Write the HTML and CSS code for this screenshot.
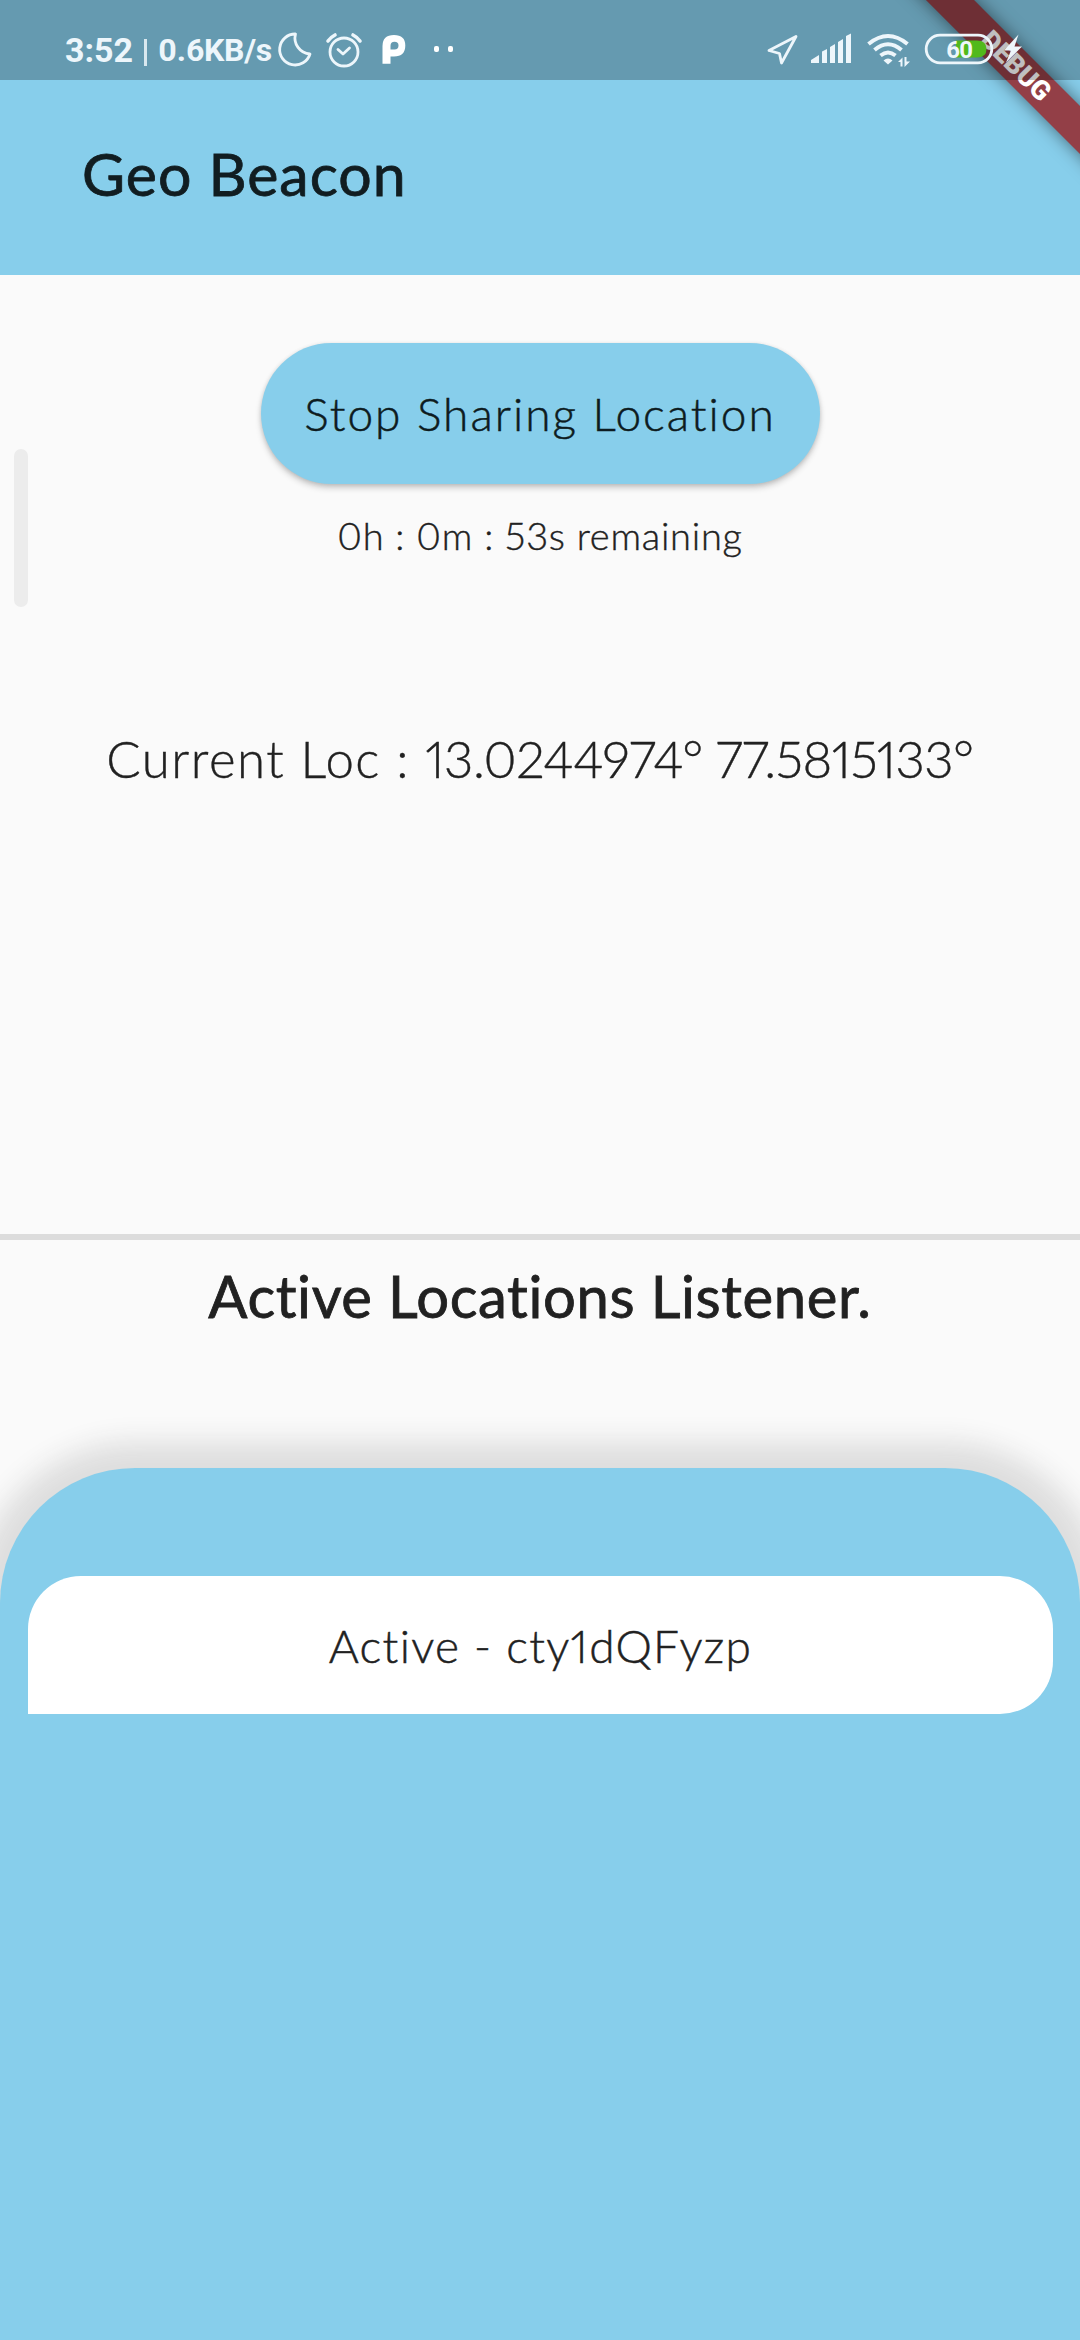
FILE: index.html
```html
<!DOCTYPE html>
<html lang="en">
<head>
<meta charset="utf-8">
<title>Geo Beacon</title>
<link rel="stylesheet" href="styles.css">
</head>
<body>
<div class="app">
  <header class="app-bar">
    <h1 class="title">Geo Beacon</h1>
    <div class="debug-banner">DEBUG</div>
    <div class="status-bar">
      <span class="clock">3:52</span><span class="separator"></span><span class="speed">0.6KB/s</span>
      <svg class="moon" width="38" height="80" viewBox="276 0 38 80"><path d="M295.500 34 A15.500 15.500 0 1 0 310 54 A16 16 0 0 1 295.500 34 Z"/></svg>
      <svg class="alarm" width="40" height="80" viewBox="324 0 40 80"><circle cx="344" cy="52" r="14"/><path d="M338 49.500 L343 54 L349.500 48"/><path class="bells" d="M328 41 Q331 37 335 35 M353 35 Q357 37 360 41"/></svg>
      <svg class="parking" width="26" height="80" viewBox="381 0 26 80"><path fill-rule="evenodd" d="M382.500 63.800 V46 Q382.500 35 394 35 Q405.300 35 405.300 45.500 Q405.300 56.500 394 56.500 H390.500 V63.800 Z M390.500 49.500 H394.500 Q398.500 49.500 398.500 45.500 Q398.500 41.800 394.500 41.800 Q390.500 41.800 390.500 46 Z"/></svg>
      <svg class="dots" width="24" height="80" viewBox="432 0 24 80"><rect x="434" y="46" width="5" height="6" rx="2"/><rect x="448" y="46" width="5" height="6" rx="2"/></svg>
      <svg class="compass" width="36" height="80" viewBox="764 0 36 80"><path d="M796 36.500 L769 50.500 L779.500 53.500 L781.500 63 Z"/></svg>
      <svg class="signal" width="42" height="80" viewBox="810 0 42 80"><path d="M811 63 V60 L819 55 V63 Z M822 63 V51.500 L827 49 V63 Z M830 63 V47 L835 44 V63 Z M838 63 V42 L843 39 V63 Z M846 63 V36 L851 33.500 V63 Z"/></svg>
      <svg class="wifi" width="46" height="80" viewBox="865 0 46 80"><g><path d="M868.500 44 Q888 28 907.500 44"/><path d="M874.500 50 Q888 38.500 901.500 50"/><path d="M880.500 55.500 Q888 49.500 895.500 55.500"/></g><path d="M883.500 60.500 Q888 56.500 892.500 60.500 L888 64.500 Z M898 62 L902.500 57.500 V66.500 H900.500 V62 Z M904.500 57 H906.500 V61.500 H910 L904.500 67 Z"/></svg>
      <svg class="battery" width="70" height="80" viewBox="924 0 70 80"><path class="charge" d="M956 40.500 H977 Q986.500 40.500 986.500 49 Q986.500 57.500 977 57.500 H956 Z"/><rect class="case" x="926.200" y="35.200" width="65.600" height="27.600" rx="13.800"/><text x="946" y="57.700">60</text></svg>
      <svg class="bolt" width="22" height="80" viewBox="1001 0 22 80"><path d="M1018.500 34.500 L1004 50.500 H1011 L1006 62.500 L1022 46.500 H1014.500 Z"/></svg>
    </div>
  </header>
  <main class="sharing">
    <button class="stop-button">Stop Sharing Location</button>
    <p class="remaining">0h : 0m : 53s remaining</p>
    <p class="location">Current Loc : <span class="coordinates">13.0244974° 77.5815133°</span></p>
    <div class="edge-handle"></div>
  </main>
  <section class="listener">
    <h2 class="listener-title">Active Locations Listener.</h2>
    <div class="sheet">
      <div class="card">Active - cty1dQFyzp</div>
    </div>
  </section>
</div>
</body>
</html>
```
FILE: styles.css
```css
* { box-sizing: border-box; }
body { margin: 0; background: #fafafa; overflow: hidden; }
.app {
  display: flex; flex-direction: column;
  width: 1080px; height: 2340px; overflow: hidden;
  color: #212121; font-family: Lato, "Noto Sans", sans-serif; font-weight: 300;
  font-variant-ligatures: none; font-variant-numeric: proportional-nums;
}
h1, h2 { margin: 0; font-weight: 400; }
p { margin: 0; }
.app-bar { position: relative; height: 275px; padding: 80px 0 0 82px; background: #87ceeb; overflow: hidden; }
.title { font-size: 59px; line-height: 188px; letter-spacing: 1px; color: #111d21; -webkit-text-stroke: .8px #111d21; }
.debug-banner {
  position: absolute; left: 866px; top: 49px; width: 300px; height: 34px;
  transform: rotate(45deg); background: #933f47; box-shadow: 0 0 17px rgba(0, 0, 0, .5);
  color: #fff; font: 900 27px/34px Roboto, sans-serif; text-align: center;
}
.status-bar {
  position: absolute; inset: 0 0 auto 0; height: 80px; padding-left: 65px;
  display: flex; background: rgba(0, 0, 0, .25);
  color: #edf6fb; font-family: Roboto, sans-serif; font-weight: 700;
}
.status-bar svg { flex: none; fill: #edf6fb; }
.clock { width: 79px; font-size: 34px; line-height: 100px; }
.separator { width: 3px; height: 27px; margin-top: 39px; background: #d9e8ef; }
.speed { width: 129px; padding-left: 11px; font-size: 32px; line-height: 101px; letter-spacing: -.3px; }
.status-bar .moon, .status-bar .alarm, .status-bar .compass { fill: none; stroke: #edf6fb; stroke-width: 2.8; stroke-linejoin: round; stroke-linecap: round; }
.alarm { margin-left: 10px; }
.alarm .bells { stroke-width: 3.6; }
.status-bar .parking, .status-bar .dots { fill: #fff; }
.parking { margin-left: 17px; }
.dots { margin-left: 25px; }
.compass { margin-left: 308px; }
.signal { margin-left: 10px; }
.wifi { margin-left: 13px; }
.wifi g { fill: none; stroke: #edf6fb; stroke-width: 4; }
.battery { margin-left: 13px; }
.battery .charge { fill: #51b91b; }
.battery .case { fill: none; stroke: #edf6fb; stroke-width: 2.8; }
.battery text { font-size: 24px; font-weight: 700; letter-spacing: -1px; }
.bolt { margin-left: 7px; }
.sharing {
  position: relative; height: 965px; padding-top: 68px; border-bottom: 6px solid #dcdcdc;
  display: flex; flex-direction: column; align-items: center;
}
.stop-button {
  width: 559px; height: 141px; padding: 0; border: 0; border-radius: 71px; background: #87ceeb;
  box-shadow: 0 4px 6px rgba(0, 0, 0, .18), 0 1px 4px rgba(0, 0, 0, .12);
  color: #0d1b20; font: 300 46px/141px Lato, sans-serif; font-variant-ligatures: none;
  letter-spacing: 2px; -webkit-text-stroke: .5px #0d1b20;
}
.remaining { margin-top: 19px; font-size: 38px; line-height: 64px; letter-spacing: .75px; -webkit-text-stroke: .4px #212121; }
.location { margin-top: 160px; font-size: 51px; line-height: 64px; letter-spacing: 1.5px; -webkit-text-stroke: .4px #212121; }
.coordinates { letter-spacing: -.5px; }
.edge-handle { position: absolute; left: 14px; top: 174px; width: 14px; height: 158px; border-radius: 7px; background: #ececec; }
.listener { flex: 1; display: flex; flex-direction: column; text-align: center; }
.listener-title { height: 228px; padding-top: 18px; font-size: 58px; line-height: 76px; letter-spacing: .6px; -webkit-text-stroke: .8px #212121; }
.sheet {
  flex: 1; padding: 108px 27px 0 28px; border-radius: 135px 135px 0 0; background: #87ceeb;
  box-shadow: 0 0 28px 26px #dedede;
}
.card { height: 138px; border-radius: 53px 53px 53px 0; background: #fff; font-size: 46px; line-height: 140px; letter-spacing: 1.3px; -webkit-text-stroke: .5px #212121; }
```
